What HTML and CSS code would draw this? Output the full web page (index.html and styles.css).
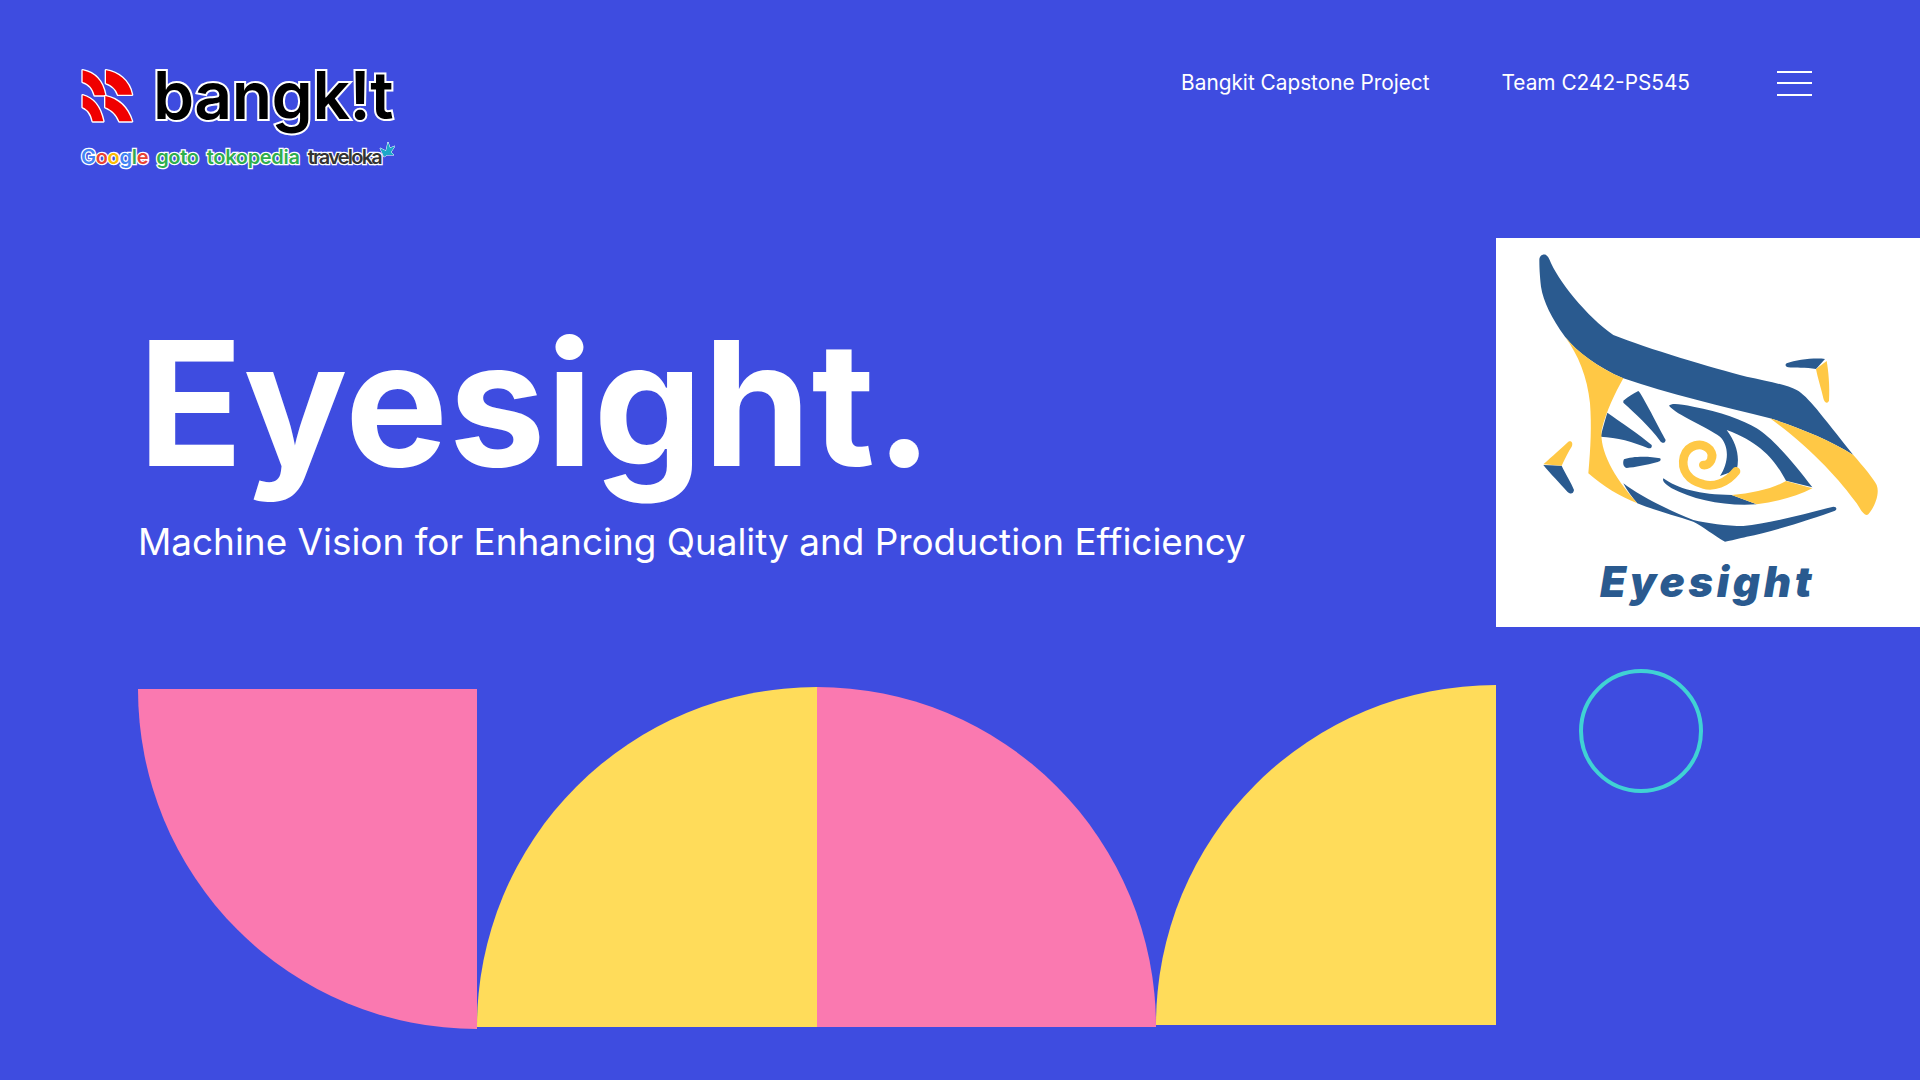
FILE: index.html
```html
<!DOCTYPE html>
<html lang="en">
<head>
<meta charset="utf-8">
<title>Eyesight</title>
<link rel="stylesheet" href="styles.css">
</head>
<body>
<div class="slide">
  <header class="topbar">
    <div class="brand">
      <div class="brand-main">
        <svg class="brand-mark" viewBox="0 0 198 198" aria-hidden="true">
          <g class="mark-arcs">
            <path d="M20 25C55 32 80 55 88 100L56 100C50 78 40 66 20 60Z"/>
            <path d="M90 25C125 30 160 55 168 98L126 98C120 82 108 70 90 64Z"/>
            <path d="M20 100C50 108 72 130 82 178L50 178C46 158 38 144 20 136Z"/>
            <path d="M88 102C125 110 155 135 168 178L130 178C122 158 108 144 88 136Z"/>
          </g>
        </svg>
        <span class="brand-word">bangk!t</span>
      </div>
      <div class="brand-partners">
        <span class="partner-google"><span class="c-b">G</span><span class="c-r">o</span><span class="c-y">o</span><span class="c-b">g</span><span class="c-g">l</span><span class="c-r">e</span></span>
        <span class="partner-green">goto</span>
        <span class="partner-green">tokopedia</span>
        <span class="partner-dark">traveloka</span>
        <svg class="partner-bird" viewBox="0 0 16 16" aria-hidden="true"><path d="M1 6 L7 9 L9 0 L11 6 L16 4 L12 10 L15 13 L8 13 L5 15Z" fill="#1ba8c8" stroke="#fff" stroke-width="1"/></svg>
      </div>
    </div>
    <nav class="nav">
      <a class="nav-link">Bangkit Capstone Project</a>
      <a class="nav-link">Team C242-PS545</a>
      <span class="burger"><i></i><i></i><i></i></span>
    </nav>
  </header>
  <main class="content">
    <section class="left">
      <h1 class="title">Eyesight.</h1>
      <p class="subtitle">Machine Vision for Enhancing Quality and Production Efficiency</p>
      <div class="shapes">
        <div class="shape s1"></div>
        <div class="shape s2"></div>
        <div class="shape s3"></div>
        <div class="shape s4"></div>
      </div>
    </section>
    <aside class="right">
      <div class="card">
        <svg class="eye" viewBox="48 24 1272 1167" role="img" aria-label="Eyesight logo">
          <g class="dark">
            <path d="M178 90C178 72 200 65 208 88C232 150 320 260 400 315C500 355 700 415 800 440C860 452 920 465 950 480C985 500 1020 550 1120 675C1050 630 950 590 870 565C730 530 560 490 430 445C350 410 290 365 255 320C215 265 190 215 183 170C179 135 178 110 178 90Z"/>
            <path d="M920 400C950 390 1000 383 1035 387L1008 417C980 412 940 415 925 412C915 410 915 403 920 400Z"/>
            <path d="M190 705L245 707C255 730 275 760 282 780C280 793 270 793 262 785C240 760 210 730 190 705Z"/>
            <path d="M430 512C445 500 460 490 475 483C485 490 540 600 557 630C555 642 545 640 540 632C510 590 465 550 430 518Z"/>
            <path d="M382 548C420 575 480 615 515 645C517 655 510 655 505 655C460 635 410 622 362 620C368 595 375 570 382 548Z"/>
            <path d="M432 688C455 678 510 678 540 685C545 690 540 695 530 697C500 705 465 712 440 714C428 712 428 695 432 688Z"/>
            <path d="M567 527C575 518 600 522 640 530C720 545 790 570 830 595C880 625 950 710 997 772L918 752C890 700 850 640 740 600C770 640 780 680 770 720L720 738C745 700 750 650 720 620C680 590 590 555 567 527Z"/>
            <path d="M550 745C590 775 660 795 755 795L830 823C740 830 640 810 575 775C560 765 545 755 550 745Z"/>
            <path d="M430 760C470 790 540 830 640 870C680 880 740 888 790 888C870 880 980 850 1060 830C1070 830 1072 838 1065 842C1000 865 880 905 800 920C780 925 750 932 735 935C700 915 670 890 640 875C580 855 520 840 472 820C455 800 440 780 430 760Z"/>
          </g>
          <g class="gold">
            <path d="M255 320C295 370 360 415 430 445C405 490 380 540 365 600C358 660 400 740 472 820C420 800 370 770 325 730C332 650 335 590 330 520C322 440 295 375 255 320Z"/>
            <path d="M870 565C950 590 1050 630 1120 675C1150 710 1180 745 1190 765C1200 790 1185 830 1165 853C1155 860 1145 845 1130 820C1080 750 990 650 870 565Z"/>
            <path d="M1040 393C1045 420 1050 470 1047 512C1040 525 1032 515 1030 505C1025 480 1012 440 1008 417Z"/>
            <path d="M190 703C215 680 250 650 265 635C275 630 280 640 275 650C265 665 255 685 245 707Z"/>
            <path d="M755 795C820 790 880 775 918 753L997 775C950 800 890 815 830 823Z"/>
          </g>
          <path class="spiral" d="M768 724C740 760 700 772 670 763C625 752 602 720 612 680C622 645 665 632 690 660C705 680 690 708 670 705"/>
          <text class="eye-text" x="360" y="1100">Eyesight</text>
        </svg>
      </div>
      <div class="ring"></div>
    </aside>
  </main>
</div>
</body>
</html>
```

FILE: styles.css
```css
html, body {
  margin: 0;
  padding: 0;
}
body {
  background: #3e4ce0;
  font-family: "Inter", "Liberation Sans", sans-serif;
  color: #fff;
}
.slide {
  width: 1920px;
  height: 1080px;
  overflow: hidden;
  display: flex;
  flex-direction: column;
  background: #3e4ce0;
}
.topbar {
  height: 238px;
  flex: none;
  box-sizing: border-box;
  padding: 62px 108px 0 76px;
  display: flex;
  justify-content: space-between;
  align-items: flex-start;
}
.brand {
  width: 320px;
  display: flex;
  flex-direction: column;
}
.brand-main {
  display: flex;
  align-items: flex-start;
  height: 82px;
  gap: 11px;
}
.brand-mark {
  width: 66px;
  height: 66px;
  flex: none;
}
.mark-arcs {
  fill: #f00000;
  stroke: #fff;
  stroke-width: 8;
  stroke-linejoin: round;
  paint-order: stroke fill;
}
.brand-word {
  font-size: 66px;
  line-height: 66px;
  font-weight: 600;
  color: #000;
  letter-spacing: -0.5px;
  -webkit-text-stroke: 4px #fff;
  paint-order: stroke fill;
}
.brand-partners {
  display: flex;
  align-items: center;
  gap: 8px;
  padding-left: 5px;
  font-size: 20px;
  line-height: 26px;
  font-weight: 600;
  letter-spacing: -0.3px;
  -webkit-text-stroke: 2.5px #fff;
  paint-order: stroke fill;
}
.c-b { color: #4285f4; }
.c-r { color: #ea4335; }
.c-y { color: #fbbc05; }
.c-g { color: #34a853; }
.partner-green { color: #2fae4e; }
.partner-dark {
  color: #333;
  letter-spacing: -1.8px;
}
.partner-bird {
  width: 16px;
  height: 16px;
  flex: none;
  margin: -14px 0 0 -10px;
}
.nav {
  display: flex;
  align-items: center;
  height: 34px;
  margin-top: 4px;
  font-size: 20.8px;
}
.nav-link {
  line-height: 34px;
  margin-right: 72px;
  font-weight: 400;
}
.nav-link + .nav-link {
  margin-right: 87px;
}
.burger {
  width: 35px;
  height: 25px;
  display: flex;
  flex-direction: column;
  justify-content: space-between;
}
.burger i {
  display: block;
  height: 2px;
  background: #fff;
}
.content {
  flex: 1;
  display: flex;
}
.left {
  width: 1496px;
  flex: none;
  box-sizing: border-box;
  padding-left: 138px;
  display: flex;
  flex-direction: column;
}
.title {
  margin: 70px 0 0;
  font-size: 173px;
  line-height: 190px;
  font-weight: 700;
  letter-spacing: 0.5px;
}
.subtitle {
  margin: 21px 0 0;
  font-size: 36.9px;
  line-height: 46px;
  font-weight: 400;
}
.shapes {
  display: flex;
  align-items: flex-start;
  margin-top: 120px;
}
.shape {
  height: 339.5px;
  flex: none;
}
.s1 {
  width: 339px;
  background: #fa79b0;
  border-bottom-left-radius: 100%;
  margin-top: 4px;
}
.s2 {
  width: 340px;
  background: #ffdc5a;
  border-top-left-radius: 100%;
  margin-top: 2px;
}
.s3 {
  width: 339px;
  background: #fa79b0;
  border-top-right-radius: 100%;
  margin-top: 2px;
}
.s4 {
  width: 340px;
  background: #ffdc5a;
  border-top-left-radius: 100%;
}
.right {
  flex: 1;
  display: flex;
  flex-direction: column;
}
.card {
  height: 389px;
  background: #fff;
}
.eye {
  display: block;
  width: 424px;
  height: 389px;
}
.dark { fill: #2a5a8f; }
.gold { fill: #ffc845; }
.spiral {
  fill: none;
  stroke: #ffc845;
  stroke-width: 26;
  stroke-linecap: round;
}
.eye-text {
  font-family: "Inter", "Liberation Sans", sans-serif;
  font-size: 126px;
  font-weight: 900;
  font-style: italic;
  letter-spacing: 11px;
  fill: #2a5a8f;
}
.ring {
  width: 124px;
  height: 124px;
  box-sizing: border-box;
  border: 4px solid #40d2d4;
  border-radius: 50%;
  margin: 42px 0 0 83px;
}
```
